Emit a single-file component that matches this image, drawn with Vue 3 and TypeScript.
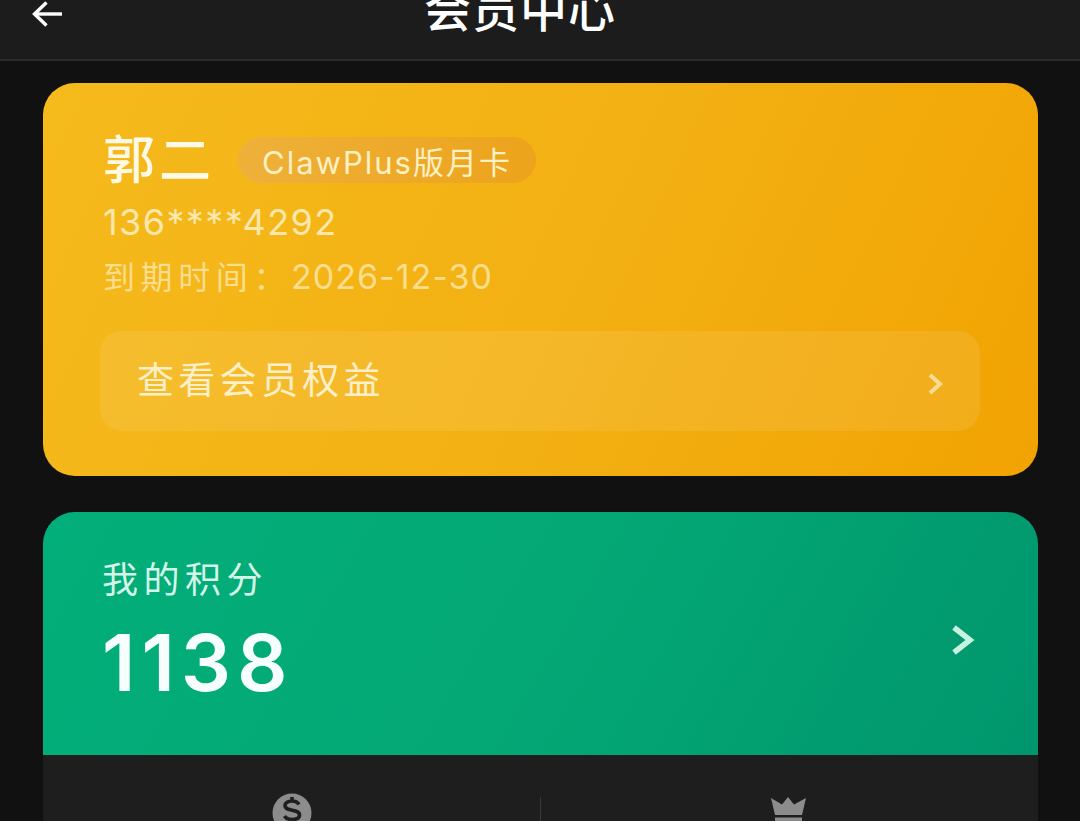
<template>
  <div class="page">
    <header class="top-bar">
      <button class="back" aria-label="返回">
        <svg width="36" height="30" viewBox="0 0 36 30" fill="none" stroke="#fff" stroke-width="3.4">
          <path d="M32 14H5" />
          <path d="M16.500 2.500 4.500 14l12 11.500" />
        </svg>
      </button>
      <h1 class="title">会员中心</h1>
    </header>

    <main class="content">
      <section class="card vip-card">
        <div class="name-row">
          <span class="name">郭二</span>
          <span class="plan">ClawPlus版月卡</span>
        </div>
        <div class="phone">136****4292</div>
        <div class="expire">到期时间：<span class="expire-date">2026-12-30</span></div>
        <div class="benefits">
          <span class="benefits-text">查看会员权益</span>
          <svg class="benefits-arrow" width="18" height="22" viewBox="0 0 18 22" fill="none" stroke="#fbdd96" stroke-width="4">
            <path d="M3 2l10 9-10 9" />
          </svg>
        </div>
      </section>

      <section class="points">
        <div class="points-head">
          <div>
            <div class="points-label">我的积分</div>
            <div class="points-value">1138</div>
          </div>
          <svg class="points-arrow" width="26" height="30" viewBox="0 0 26 30" fill="none" stroke="#c8f3e1" stroke-width="5.5">
            <path d="M4 2.500 20 15 4 27.500" />
          </svg>
        </div>
        <div class="points-actions">
          <div class="action">
            <svg width="40" height="50" viewBox="0 0 40 50">
              <circle cx="20" cy="22" r="19.500" fill="#8c8c8c" />
              <path d="M27 13.500c-1.500-2.500-4-3.500-7-3.500-4 0-7 1.800-7 4.500 0 6.500 14.500 3 14.500 9.500 0 3.200-3 4.500-7.500 4.500-3.500 0-6-1-7.500-3.500M20 6v4M20 28.500v4" fill="none" stroke="#1e1e1e" stroke-width="3.600" />
            </svg>
          </div>
          <div class="action action-right">
            <svg width="38" height="50" viewBox="0 0 38 50">
              <path d="M1 3l11 6.500L18 2l6 7.500L36 3l-4 17H5z" fill="#8c8c8c" />
              <path d="M5 22.500h27v6H5z" fill="#8c8c8c" />
            </svg>
          </div>
        </div>
      </section>
    </main>
  </div>
</template>

<script setup lang="ts">
</script>

<style>
html,
body {
  margin: 0;
  background: #111111;
  overflow: hidden;
}
</style>

<style scoped>
.page {
  width: 1080px;
  height: 821px;
  overflow: hidden;
  background: #111111;
  font-family: "Noto Sans CJK SC", "Noto Sans", sans-serif;
}

.top-bar {
  height: 61px;
  box-sizing: border-box;
  padding-right: 40px;
  display: flex;
  justify-content: center;
  background: #1c1c1c;
  border-bottom: 2px solid #2a2a2a;
  position: relative;
  overflow: hidden;
}

.back {
  position: absolute;
  left: 30px;
  top: 0;
  padding: 0;
  background: none;
  border: none;
}

.title {
  margin: -26px 0 0;
  font-size: 47px;
  line-height: 66px;
  font-weight: 500;
  color: #ffffff;
  letter-spacing: 1px;
}

.content {
  padding: 22px 42px 0 43px;
  display: flex;
  flex-direction: column;
  gap: 36px;
}

.card {
  box-sizing: border-box;
  height: 393px;
  border-radius: 32px;
  padding: 50px 58px 0 57px;
}

.vip-card {
  background: linear-gradient(115deg, #f5ba1c 0%, #f3b012 55%, #f1a302 100%);
}

.name-row {
  display: flex;
  align-items: center;
  gap: 23px;
  height: 54px;
}

.name {
  margin: 0 0 6px 3px;
  font-size: 52px;
  line-height: 54px;
  font-weight: 500;
  letter-spacing: 4px;
  color: #fff9e6;
}

.plan {
  height: 46px;
  padding: 0 24px;
  display: flex;
  align-items: center;
  border-radius: 23px;
  font-family: Inter, "Noto Sans CJK SC", sans-serif;
  font-size: 31px;
  letter-spacing: 2px;
  color: #fdf0c4;
  background: linear-gradient(90deg, #eeb13a 0%, #eda31b 100%);
}

.phone {
  margin: 10px 0 0 3px;
  font-family: Inter, sans-serif;
  font-size: 36px;
  font-weight: 400;
  line-height: 50px;
  letter-spacing: 1.4px;
  color: #fbe7ab;
}

.expire {
  margin: 5px 0 0 3px;
  font-size: 32px;
  line-height: 46px;
  letter-spacing: 5.6px;
  color: #fadd8d;
}

.expire-date {
  font-family: Inter, sans-serif;
  font-size: 34px;
  font-weight: 400;
  letter-spacing: 1px;
}

.benefits {
  margin-top: 31px;
  height: 100px;
  padding: 0 35px 0 37px;
  display: flex;
  align-items: center;
  justify-content: space-between;
  border-radius: 22px;
  background: rgba(255, 255, 255, 0.09);
  color: #fdf0c8;
}

.benefits-text {
  margin-bottom: 6px;
  font-size: 37px;
  letter-spacing: 4.3px;
}

.benefits-arrow {
  margin-top: 6px;
}

.points {
  border-radius: 32px 32px 0 0;
  overflow: hidden;
  background: #1e1e1e;
}

.points-head {
  height: 243px;
  box-sizing: border-box;
  padding: 42px 62px 0 59px;
  display: flex;
  justify-content: space-between;
  background: linear-gradient(120deg, #02ae79 0%, #04a875 50%, #00966d 100%);
}

.points-label {
  font-size: 36px;
  line-height: 46px;
  letter-spacing: 5.5px;
  color: #d5f5e8;
}

.points-value {
  margin-top: 20px;
  font-family: Inter, sans-serif;
  font-size: 79px;
  line-height: 84px;
  font-weight: 600;
  letter-spacing: 6px;
  color: #f7fffc;
}

.points-arrow {
  margin-top: 71px;
}

.points-actions {
  height: 100px;
  display: grid;
  grid-template-columns: 497px 1fr;
}

.action {
  display: flex;
  justify-content: center;
  padding: 36px 0 0 0;
}

.action svg {
  flex: none;
}

.action-right {
  position: relative;
  padding-top: 40px;
}

.action-right::before {
  content: "";
  position: absolute;
  left: 0;
  top: 42px;
  width: 1px;
  height: 60px;
  background: #383838;
}
</style>
